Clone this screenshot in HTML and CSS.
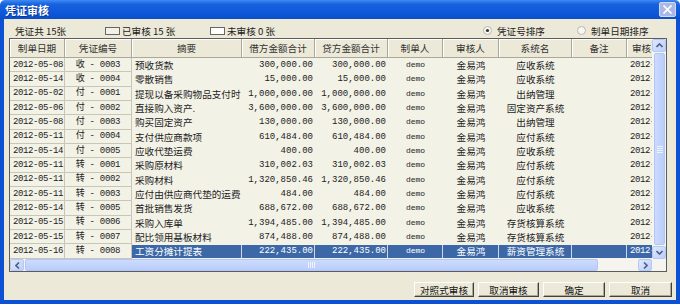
FILE: index.html
```html
<!DOCTYPE html>
<html lang="zh-CN">
<head>
  <meta charset="UTF-8">
  <meta name="viewport" content="width=device-width, initial-scale=1.0">
  <title>凭证审核</title>
  <link rel="stylesheet" href="styles.css">
</head>
<body>
  <div class="window">
    <div class="titlebar">
      <span class="title">凭证审核</span>
      <span class="close-btn">
        <svg width="11" height="9" viewBox="0 0 11 9"><path d="M1.5 0.5 L9.5 8.5 M9.5 0.5 L1.5 8.5" stroke="#fff" stroke-width="1.7"/></svg>
      </span>
    </div>

    <div class="body">
      <div class="summary">
        <span class="count">凭证共 15张</span>
        <span class="legend legend-done"><i class="swatch swatch-done"></i>已审核 15 张</span>
        <span class="legend legend-todo"><i class="swatch swatch-todo"></i>未审核 0 张</span>
        <label class="radio radio-first">
          <svg width="9" height="9" viewBox="0 0 9 9"><circle cx="4.5" cy="4.5" r="4" fill="#f7f7f4" stroke="#b9b7ac"/><circle cx="4.5" cy="4.5" r="1.6" fill="#333"/></svg>
          凭证号排序
        </label>
        <label class="radio">
          <svg width="9" height="9" viewBox="0 0 9 9"><circle cx="4.5" cy="4.5" r="4" fill="#f7f7f4" stroke="#b9b7ac"/></svg>
          制单日期排序
        </label>
      </div>

      <div class="grid">
        <div class="grid-top">
          <div class="viewport">
            <table class="vouchers">
              <colgroup>
                <col class="c-date"><col class="c-no"><col class="c-memo"><col class="c-amt"><col class="c-amt">
                <col class="c-user"><col class="c-auditor"><col class="c-sys"><col class="c-note"><col class="c-adate">
              </colgroup>
              <thead>
                <tr>
                  <th>制单日期</th><th>凭证编号</th><th>摘要</th><th>借方金额合计</th><th>贷方金额合计</th>
                  <th>制单人</th><th>审核人</th><th>系统名</th><th>备注</th><th class="th-left">审核日期</th>
                </tr>
              </thead>
              <tbody>
                <tr><td class="fix date">2012-05-08</td><td class="fix no">收 - 0003</td><td class="memo">预收货款</td><td class="num">300,000.00</td><td class="num">300,000.00</td><td class="user">demo</td><td class="mid">金易鸿</td><td class="mid">应收系统</td><td></td><td class="adate">2012-05-18</td></tr>
                <tr><td class="fix date">2012-05-14</td><td class="fix no">收 - 0004</td><td class="memo">零散销售</td><td class="num">15,000.00</td><td class="num">15,000.00</td><td class="user">demo</td><td class="mid">金易鸿</td><td class="mid">应收系统</td><td></td><td class="adate">2012-05-18</td></tr>
                <tr><td class="fix date">2012-05-02</td><td class="fix no">付 - 0001</td><td class="memo">提现以备采购物品支付时</td><td class="num">1,000,000.00</td><td class="num">1,000,000.00</td><td class="user">demo</td><td class="mid">金易鸿</td><td class="mid">出纳管理</td><td></td><td class="adate">2012-05-18</td></tr>
                <tr><td class="fix date">2012-05-06</td><td class="fix no">付 - 0002</td><td class="memo">直接购入资产.</td><td class="num">3,600,000.00</td><td class="num">3,600,000.00</td><td class="user">demo</td><td class="mid">金易鸿</td><td class="mid">固定资产系统</td><td></td><td class="adate">2012-05-18</td></tr>
                <tr><td class="fix date">2012-05-08</td><td class="fix no">付 - 0003</td><td class="memo">购买固定资产</td><td class="num">130,000.00</td><td class="num">130,000.00</td><td class="user">demo</td><td class="mid">金易鸿</td><td class="mid">出纳管理</td><td></td><td class="adate">2012-05-18</td></tr>
                <tr><td class="fix date">2012-05-11</td><td class="fix no">付 - 0004</td><td class="memo">支付供应商款项</td><td class="num">610,484.00</td><td class="num">610,484.00</td><td class="user">demo</td><td class="mid">金易鸿</td><td class="mid">应付系统</td><td></td><td class="adate">2012-05-18</td></tr>
                <tr><td class="fix date">2012-05-14</td><td class="fix no">付 - 0005</td><td class="memo">应收代垫运费</td><td class="num">400.00</td><td class="num">400.00</td><td class="user">demo</td><td class="mid">金易鸿</td><td class="mid">应收系统</td><td></td><td class="adate">2012-05-18</td></tr>
                <tr><td class="fix date">2012-05-11</td><td class="fix no">转 - 0001</td><td class="memo">采购原材料</td><td class="num">310,002.03</td><td class="num">310,002.03</td><td class="user">demo</td><td class="mid">金易鸿</td><td class="mid">应付系统</td><td></td><td class="adate">2012-05-18</td></tr>
                <tr><td class="fix date">2012-05-11</td><td class="fix no">转 - 0002</td><td class="memo">采购材料</td><td class="num">1,320,850.46</td><td class="num">1,320,850.46</td><td class="user">demo</td><td class="mid">金易鸿</td><td class="mid">应付系统</td><td></td><td class="adate">2012-05-18</td></tr>
                <tr><td class="fix date">2012-05-11</td><td class="fix no">转 - 0003</td><td class="memo">应付由供应商代垫的运费</td><td class="num">484.00</td><td class="num">484.00</td><td class="user">demo</td><td class="mid">金易鸿</td><td class="mid">应付系统</td><td></td><td class="adate">2012-05-18</td></tr>
                <tr><td class="fix date">2012-05-14</td><td class="fix no">转 - 0005</td><td class="memo">首批销售发货</td><td class="num">688,672.00</td><td class="num">688,672.00</td><td class="user">demo</td><td class="mid">金易鸿</td><td class="mid">应收系统</td><td></td><td class="adate">2012-05-18</td></tr>
                <tr><td class="fix date">2012-05-15</td><td class="fix no">转 - 0006</td><td class="memo">采购入库单</td><td class="num">1,394,485.00</td><td class="num">1,394,485.00</td><td class="user">demo</td><td class="mid">金易鸿</td><td class="mid">存货核算系统</td><td></td><td class="adate">2012-05-18</td></tr>
                <tr><td class="fix date">2012-05-15</td><td class="fix no">转 - 0007</td><td class="memo">配比领用基板材料</td><td class="num">874,488.00</td><td class="num">874,488.00</td><td class="user">demo</td><td class="mid">金易鸿</td><td class="mid">存货核算系统</td><td></td><td class="adate">2012-05-18</td></tr>
                <tr class="selected"><td class="fix date">2012-05-16</td><td class="fix no">转 - 0008</td><td class="memo">工资分摊计提表</td><td class="num">222,435.00</td><td class="num">222,435.00</td><td class="user">demo</td><td class="mid">金易鸿</td><td class="mid">薪资管理系统</td><td></td><td class="adate">2012-05-18</td></tr>
              </tbody>
            </table>
          </div>
          <div class="vscroll">
            <span class="arrow-btn"><svg width="7" height="5" viewBox="0 0 7 5"><path d="M0.5 4 L3.5 1 L6.5 4" fill="none" stroke="#4d6185" stroke-width="1.6"/></svg></span>
            <span class="thumb thumb-v"><i></i><i></i><i></i><i></i></span>
            <span class="arrow-btn"><svg width="7" height="5" viewBox="0 0 7 5"><path d="M0.5 1 L3.5 4 L6.5 1" fill="none" stroke="#4d6185" stroke-width="1.6"/></svg></span>
          </div>
        </div>
        <div class="grid-bottom">
          <div class="hscroll">
            <span class="arrow-btn"><svg width="5" height="7" viewBox="0 0 5 7"><path d="M4 0.5 L1 3.5 L4 6.5" fill="none" stroke="#4d6185" stroke-width="1.6"/></svg></span>
            <span class="thumb thumb-h"><i></i><i></i><i></i><i></i></span>
            <span class="track"></span>
            <span class="arrow-btn"><svg width="5" height="7" viewBox="0 0 5 7"><path d="M1 0.5 L4 3.5 L1 6.5" fill="none" stroke="#4d6185" stroke-width="1.6"/></svg></span>
          </div>
          <div class="corner"></div>
        </div>
      </div>

      <div class="buttons">
        <button class="btn btn-compare">对照式审核</button>
        <button class="btn btn-cancel-audit">取消审核</button>
        <button class="btn btn-ok">确定</button>
        <button class="btn btn-cancel">取消</button>
      </div>
    </div>
  </div>
</body>
</html>
```

FILE: styles.css
```css
* {
  box-sizing: border-box;
}
body {
  margin: 0;
  background: #fff;
  font-family: "Noto Sans CJK SC", sans-serif;
  font-size: 9.6px;
  color: #1c1c1c;
}
.window {
  width: 680px;
  height: 304px;
  display: flex;
  flex-direction: column;
}

/* title bar */
.titlebar {
  height: 19px;
  display: flex;
  align-items: center;
  justify-content: space-between;
  padding: 0 4px 0 5px;
  border-radius: 5px 5px 0 0;
  background: linear-gradient(#3f8bf2, #1862df 22%, #0c58d9 70%, #0a4ec9);
}
.title {
  color: #fff;
  font-size: 11px;
  font-weight: bold;
  text-shadow: 1px 1px #0b3593;
}
.close-btn {
  width: 17px;
  height: 15px;
  display: flex;
  align-items: center;
  justify-content: center;
  background: #a9b8e7;
  border: 1px solid #d3dbf4;
  border-radius: 2px;
}

.body {
  flex: 1;
  display: flex;
  flex-direction: column;
  padding-left: 5px;
  background: #ece9d8;
  border: 4px solid #0c50d3;
  border-top: 0;
}

/* counts + sort options */
.summary {
  height: 19px;
  padding: 4px 0 0 6px;
  display: flex;
  align-items: center;
  white-space: nowrap;
}
.count { width: 90px; }
.legend {
  display: flex;
  align-items: center;
}
.legend-done { width: 105px; }
.legend-todo { width: 273px; }
.swatch {
  width: 15px;
  height: 8px;
  margin-right: 2px;
  border: 1px solid #666;
}
.swatch-done { background: #f3f2e7; }
.swatch-todo { background: #fff; }
.radio {
  display: flex;
  align-items: center;
}
.radio svg { margin-right: 5px; }
.radio-first { width: 94px; }

/* voucher grid */
.grid {
  width: 658px;
  border: 1px solid #5c5c5c;
  background: #f3f2e7;
}
.grid-top {
  height: 220px;
  display: flex;
}
.viewport {
  width: 642px;
  overflow: hidden;
}
.vouchers {
  width: 687px;
  table-layout: fixed;
  border-collapse: separate;
  border-spacing: 0;
}
.c-date { width: 55px; }
.c-no { width: 67px; }
.c-memo { width: 110px; }
.c-amt { width: 73px; }
.c-user { width: 55px; }
.c-auditor { width: 56px; }
.c-sys { width: 73px; }
.c-note { width: 55px; }
.c-adate { width: 70px; }

.vouchers th {
  height: 19px;
  padding: 0;
  font-weight: normal;
  color: #333;
  text-align: center;
  background: #ece9d8;
  border-right: 1px solid #aca899;
  border-bottom: 1px solid #aca899;
  box-shadow: inset 1px 1px #fff;
}
.vouchers th.th-left {
  text-align: left;
  padding-left: 5px;
}
.vouchers tbody tr { height: 14.33px; }
.vouchers td {
  padding: 0 3px;
  line-height: 12px;
  white-space: nowrap;
  overflow: hidden;
}
.vouchers td.fix {
  border-right: 1px solid #c9c6b6;
  border-bottom: 1px solid #c9c6b6;
}
.date {
  padding-left: 2px;
  font-family: "Liberation Mono", monospace;
  font-size: 9px;
  letter-spacing: -0.4px;
}
.vouchers td.no {
  text-align: center;
  font-family: "Liberation Mono", "Noto Sans CJK SC", monospace;
  font-size: 9px;
  letter-spacing: -0.3px;
}
.num {
  text-align: right;
  font-family: "Liberation Mono", monospace;
  font-size: 9px;
}
.vouchers td.num { padding-right: 2px; }
.user {
  text-align: center;
  font-family: "Liberation Mono", monospace;
  font-size: 8px;
}
.mid { text-align: center; }
.adate {
  font-family: "Liberation Mono", monospace;
  font-size: 9px;
  letter-spacing: -0.4px;
}
.selected td:not(.fix) {
  background: #3c68a8;
  color: #fff;
  box-shadow: inset 0 1px #f3f2e7, inset 0 -1px #f3f2e7, inset -1px 0 #cfd6e6;
}

/* scrollbars */
.vscroll {
  width: 14px;
  display: flex;
  flex-direction: column;
  background: #f5f4ef;
}
.arrow-btn {
  width: 14px;
  height: 14px;
  display: flex;
  align-items: center;
  justify-content: center;
  background: linear-gradient(135deg, #dde7fe, #bccffb);
  border: 1px solid #b5c8f6;
  border-radius: 2px;
}
.vscroll .arrow-btn { height: 13px; }
.thumb {
  display: flex;
  align-items: center;
  justify-content: center;
  gap: 1px;
  background: linear-gradient(90deg, #cddbfd, #b9cdfb);
  border: 1px solid #b2c6f5;
  border-radius: 2px;
}
.thumb i { background: #eef3fe; }
.thumb-v {
  flex: 1;
  flex-direction: column;
  margin: 1px 1px 1px 2px;
}
.thumb-v i { width: 6px; height: 1px; }
.thumb-h {
  width: 573px;
  margin: 0 0 0 1px;
  background: linear-gradient(#cddbfd, #b9cdfb);
}
.thumb-h i { width: 1px; height: 6px; }
.grid-bottom {
  height: 12px;
  display: flex;
}
.hscroll {
  width: 642px;
  display: flex;
  background: #f5f4ef;
}
.hscroll .arrow-btn { height: 12px; }
.track { flex: 1; }
.corner {
  width: 14px;
  background: #f5f4ef;
}

/* dialog buttons */
.buttons {
  margin: 10px 4px 0 0;
  display: flex;
  justify-content: flex-end;
  gap: 4px;
}
.btn {
  height: 15px;
  padding: 0;
  font-family: "Noto Sans CJK SC", sans-serif;
  font-size: 9.6px;
  color: #111;
  background: #ece9d8;
  border: 1px solid;
  border-color: #fff #404040 #404040 #fff;
  box-shadow: inset -1px -1px #aca899;
}
.btn-compare { width: 60px; }
.btn-cancel-audit { width: 61px; }
.btn-ok { width: 62px; }
.btn-cancel { width: 63px; }
```
